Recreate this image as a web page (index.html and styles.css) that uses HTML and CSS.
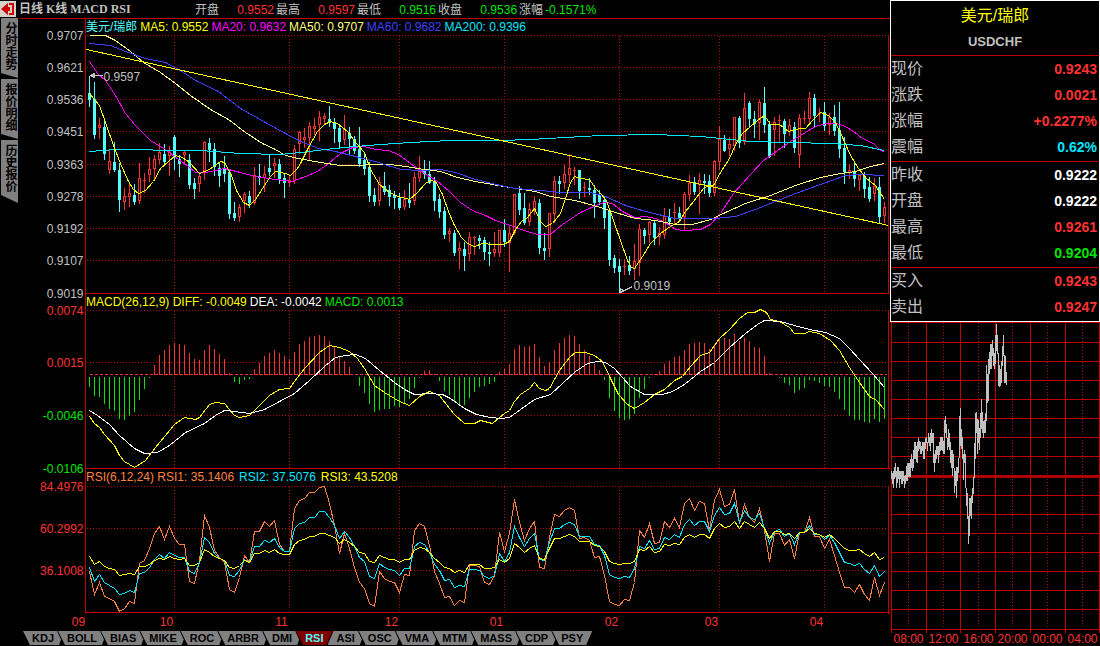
FILE: index.html
```html
<!DOCTYPE html>
<html lang="zh-CN">

<head>
    <meta charset="utf-8">
    <title>美元/瑞郎 日线</title>
    <link rel="stylesheet" href="styles.css">
</head>

<body>
    <div class="app">
        <div class="main">
            <!-- Top bar -->
            <header class="topbar">
                <button type="button" class="back-button" aria-label="返回">
                    <svg viewBox="0 0 16 16" width="16" height="16">
                        <path d="M1 8 L8 2 V6 H10 V10 H8 V14 Z" fill="#d00000"/>
                        <path d="M9 3 H13 V13 H9" fill="none" stroke="#d00000" stroke-width="2"/>
                    </svg>
                </button>
                <h1 class="title">日线 K线 MACD RSI</h1>
                <div class="quotes">
                    <span>开盘</span><span class="quote-value red">0.9552</span>
                    <span>最高</span><span class="quote-value red">0.9597</span>
                    <span>最低</span><span class="quote-value green">0.9516</span>
                    <span>收盘</span><span class="quote-value green">0.9536</span>
                    <span>涨幅</span><span class="green">-0.1571%</span>
                </div>
            </header>

            <div class="workspace">
                <!-- Views -->
                <nav class="side-tabs">
                    <button type="button" class="side-tab">分时走势</button>
                    <button type="button" class="side-tab">报价明细</button>
                    <button type="button" class="side-tab side-tab-last">历史报价</button>
                </nav>

                <!-- Charts -->
                <div class="charts">
                    <section class="panel">
                        <svg class="plot" id="kline" viewBox="17.5 17.5 872 275"></svg>
                        <p class="legend"><span class="aqua">美元/瑞郎</span><span class="yellow">MA5: 0.9552</span><span class="magenta">MA20: 0.9632</span><span class="pale">MA50: 0.9707</span><span class="blue">MA60: 0.9682</span><span class="cyan">MA200: 0.9396</span></p>
                    </section>
                    <section class="panel">
                        <svg class="plot" id="macd" viewBox="17.5 292.5 872 175"></svg>
                        <p class="legend"><span class="yellow">MACD(26,12,9) DIFF: -0.0049</span><span class="white">DEA: -0.0042</span><span class="green">MACD: 0.0013</span></p>
                    </section>
                    <section class="panel">
                        <svg class="plot" id="rsi" viewBox="17.5 467.5 872 162"></svg>
                        <p class="legend rsi-legend"><span class="orange">RSI(6,12,24) RSI1: 35.1406</span><span class="cyan">RSI2: 37.5076</span><span class="yellow">RSI3: 43.5208</span></p>
                    </section>
                </div>
            </div>

            <!-- Indicators -->
            <nav class="tabs">
                <button type="button" class="tab">KDJ</button>
                <button type="button" class="tab">BOLL</button>
                <button type="button" class="tab">BIAS</button>
                <button type="button" class="tab">MIKE</button>
                <button type="button" class="tab">ROC</button>
                <button type="button" class="tab">ARBR</button>
                <button type="button" class="tab">DMI</button>
                <button type="button" class="tab tab-active">RSI</button>
                <button type="button" class="tab">ASI</button>
                <button type="button" class="tab">OSC</button>
                <button type="button" class="tab">VMA</button>
                <button type="button" class="tab">MTM</button>
                <button type="button" class="tab">MASS</button>
                <button type="button" class="tab">CDP</button>
                <button type="button" class="tab">PSY</button>
            </nav>
        </div>

        <!-- Quote panel -->
        <aside class="quote-panel">
            <div class="quote-box">
                <div class="quote-head">
                    <h2 class="pair">美元/瑞郎</h2>
                    <p class="code">USDCHF</p>
                </div>
                <table class="quote-table">
                    <tbody>
                        <tr><th scope="row">现价</th><td class="red">0.9243</td></tr>
                        <tr><th scope="row">涨跌</th><td class="red">0.0021</td></tr>
                        <tr><th scope="row">涨幅</th><td class="red">+0.2277%</td></tr>
                        <tr><th scope="row">震幅</th><td class="cyan">0.62%</td></tr>
                    </tbody>
                    <tbody>
                        <tr><th scope="row">昨收</th><td class="white">0.9222</td></tr>
                        <tr><th scope="row">开盘</th><td class="white">0.9222</td></tr>
                        <tr><th scope="row">最高</th><td class="red">0.9261</td></tr>
                        <tr><th scope="row">最低</th><td class="green">0.9204</td></tr>
                    </tbody>
                    <tbody>
                        <tr><th scope="row">买入</th><td class="red">0.9243</td></tr>
                        <tr><th scope="row">卖出</th><td class="red">0.9247</td></tr>
                    </tbody>
                </table>
            </div>
            <svg class="plot" id="intraday" viewBox="889.5 321.5 210 324"></svg>
        </aside>
    </div>

    <script src="chart.js"></script>
</body>

</html>
```
FILE: styles.css
```css
/* General styles */
body {
    margin: 0;
    background-color: #000;
    color: #c0c0c0;
    font-family: "Liberation Sans", "Noto Sans CJK SC", sans-serif;
    font-size: 12px;
}

button {
    border: none;
    padding: 0;
    font-family: inherit;
    cursor: pointer;
}

.app {
    display: flex;
    align-items: flex-start;
}

.main {
    flex: 1;
    min-width: 0;
}

/* Text and line colors */
.red { color: #ff3232; }
.green { color: #00e600; }
.yellow { color: #ffff00; }
.magenta { color: #ff00ff; }
.pale { color: #ffff80; }
.blue { color: #4040ff; }
.cyan { color: #00e6ff; }
.aqua { color: #54ffff; }
.orange { color: #ff8040; }
.white { color: #fff; }

/* Top bar */
.topbar {
    display: flex;
    align-items: center;
    height: 18px;
    line-height: 18px;
}

.back-button {
    width: 16px;
    height: 16px;
    background-color: #d4d0c8;
}

.back-button svg {
    display: block;
}

.title {
    width: 176px;
    margin: 0 0 0 3px;
    font: bold 12px/18px "Liberation Serif", "Noto Sans CJK SC", serif;
    white-space: nowrap;
}

.quotes {
    display: flex;
    gap: 2px;
    padding-top: 2px;
    white-space: nowrap;
}

.quote-value {
    width: 53px;
    text-align: right;
}

/* Side tabs */
.workspace {
    display: flex;
    align-items: flex-start;
}

.side-tabs {
    display: flex;
    flex-direction: column;
    gap: 1px;
    width: 18px;
}

.side-tab {
    width: 17px;
    height: 60px;
    margin-left: 1px;
    padding-bottom: 4px;
    background-color: #808080;
    color: #000;
    font-size: 12px;
    font-weight: bold;
    line-height: 17px;
    writing-mode: vertical-rl;
    clip-path: polygon(0 0, 100% 0, 100% 100%, 0 calc(100% - 5px));
}

.side-tab-last {
    height: 63px;
    padding-bottom: 8px;
    clip-path: polygon(0 0, 100% 0, 100% 100%, 0 calc(100% - 8px));
}

/* Chart panels */
.charts {
    flex: 1;
    min-width: 0;
}

.panel {
    display: grid;
}

.panel > * {
    grid-area: 1 / 1;
}

.plot {
    display: block;
    width: 100%;
    height: auto;
    overflow: visible;
    shape-rendering: crispEdges;
}

.legend {
    display: flex;
    gap: 3px;
    margin: 0;
    padding: 1px 0 0 68px;
    line-height: 16px;
    white-space: nowrap;
}

.rsi-legend {
    gap: 5px;
}

.frame { stroke: #c00000; }
.grid { stroke: #b00000; stroke-dasharray: 1 2; }
.zero { stroke: #ff3232; stroke-dasharray: 3 2; }
.base { stroke: #b00000; stroke-width: 3; }
.line { fill: none; stroke: currentColor; }
.stick { stroke: currentColor; }
.solid { stroke: currentColor; stroke-width: 3; }
.hollow { fill: #000; stroke: currentColor; }
.label { fill: currentColor; font-size: 12px; }
.end { text-anchor: end; }
.middle { text-anchor: middle; }
.silver { color: #c0c0c0; }

/* Indicator tabs */
.tabs {
    display: flex;
    padding: 1px 0 0 23px;
}

.tab {
    height: 14px;
    margin-right: -5px;
    padding: 0 9px;
    background-color: #808080;
    color: #000;
    font-size: 11px;
    font-weight: bold;
    line-height: 14px;
    clip-path: polygon(0 0, calc(100% - 6px) 0, calc(100% - 2px) 60%, calc(100% - 4px) 100%, 7px 100%);
}

.tab-active {
    background-color: #800000;
    color: #54ffff;
    clip-path: polygon(0 0, 100% 0, calc(100% - 6px) 100%, 7px 100%);
}

.tab-active + .tab {
    clip-path: polygon(6px 0, calc(100% - 6px) 0, calc(100% - 2px) 60%, calc(100% - 4px) 100%, 0 100%);
}

.tab:last-child {
    clip-path: polygon(0 0, 100% 0, calc(100% - 6px) 100%, 7px 100%);
}

/* Quote panel */
.quote-panel {
    width: 210px;
}

.quote-box {
    border: 1px solid #fff;
}

.quote-head {
    padding-top: 2px;
    text-align: center;
}

.pair {
    margin: 0;
    color: #ffff00;
    font-size: 16px;
    font-weight: normal;
    line-height: 26px;
}

.code {
    margin: 0;
    font-size: 13px;
    font-weight: bold;
    line-height: 26px;
}

.quote-table {
    width: 100%;
    border-collapse: collapse;
}

.quote-table tbody {
    border-top: 1px solid #c00000;
}

.quote-table th {
    padding: 0;
    font-size: 16px;
    font-weight: normal;
    line-height: 26px;
    text-align: left;
}

.quote-table td {
    padding: 0 2px 0 0;
    font-size: 14px;
    font-weight: bold;
    line-height: 26px;
    text-align: right;
}

.quote-table tr:last-child > * {
    padding-bottom: 1px;
}
```
FILE: chart.js
```js
const SVG = "http://www.w3.org/2000/svg";
const FIRST_X = 89;
const STEP = 5;
const months = [["10", 174], ["11", 289], ["12", 399], ["01", 504], ["02", 619], ["03", 719], ["04", 824]];

// Candles: high, body top, body bottom, low; d = falling, u = rising
const candles = `75 92 98 105 d,81 98 133 137 d,117 125 127 137 u,120 126 152 158 d,149 161 169 172 u,141 161 168 170 d,162 169 198 210 d,187 196 201 208 u,182 193 196 205 u,183 194 200 203 d,
162 178 200 202 u,172 180 181 191 u,156 169 174 180 u,154 159 168 177 u,142 152 159 162 u,143 153 160 163 d,145 152 155 174 u,134 136 155 168 d,154 158 162 175 d,149 152 154 163 u,
153 159 183 187 d,177 182 187 197 d,171 176 183 190 u,140 142 170 178 u,137 142 148 160 d,142 148 165 174 d,161 167 174 185 d,155 167 172 180 d,168 171 212 217 d,201 212 216 219 d,
203 207 216 220 u,191 194 200 211 u,190 195 201 206 d,166 175 202 203 u,163 175 176 183 d,165 174 177 190 u,154 167 170 174 d,157 163 165 176 u,158 163 177 182 d,173 177 181 196 d,
174 180 182 185 u,144 149 180 182 u,130 132 143 152 u,127 137 139 146 u,121 126 137 158 u,117 126 128 133 u,110 117 124 139 u,112 116 118 123 u,105 118 121 125 d,117 122 127 141 d,
123 127 140 147 d,114 129 139 143 u,126 132 137 153 d,135 138 149 152 d,126 148 162 165 d,152 159 167 173 d,161 166 194 200 d,187 194 200 204 d,176 182 200 204 u,171 185 190 193 d,
184 189 195 204 d,190 194 196 207 d,192 197 206 208 d,189 199 206 208 u,182 199 201 206 d,171 177 200 203 u,155 171 177 180 u,159 168 172 177 d,160 173 181 182 d,176 180 199 209 d,
193 198 210 216 d,206 210 233 237 d,227 231 233 240 u,229 232 251 254 d,241 248 250 267 u,241 248 254 269 d,231 237 253 259 u,235 237 238 253 u,234 237 239 247 d,236 239 250 258 d,
241 251 252 264 d,231 249 252 255 u,230 230 252 255 u,218 229 240 245 d,224 233 242 270 u,193 194 232 233 u,185 192 208 213 d,192 207 221 223 d,202 209 221 224 u,196 201 210 213 u,
198 202 246 252 d,232 247 249 258 d,213 213 248 255 u,175 181 213 221 u,175 180 182 192 d,164 174 182 187 u,153 168 174 181 u,166 170 171 183 u,169 169 189 197 d,181 187 188 195 u,
177 187 188 193 d,184 189 201 216 d,189 194 200 203 d,195 199 216 227 d,208 209 258 264 d,254 257 266 271 d,258 265 270 292 d,258 266 267 273 u,255 264 269 273 d,243 261 268 278 u,
223 229 262 274 u,227 229 234 242 d,220 222 234 241 u,219 222 236 243 d,226 233 236 243 u,207 216 234 237 u,208 216 220 223 d,202 212 213 222 u,206 212 216 220 d,191 194 216 229 u,
174 183 194 199 u,176 181 190 193 d,172 180 184 212 u,173 180 181 192 d,174 180 191 195 d,159 161 192 194 u,125 139 161 168 u,134 139 149 150 d,136 144 148 154 u,116 117 145 149 u,
115 117 141 146 d,92 108 141 143 u,100 102 117 126 d,110 118 122 136 d,99 102 122 138 u,86 102 123 131 d,120 123 155 156 d,116 122 129 154 u,114 120 121 140 u,118 120 132 146 d,
118 125 131 134 u,121 126 146 151 d,113 118 154 166 u,110 118 119 122 u,91 98 118 122 u,93 97 114 125 d,107 113 114 120 u,101 111 124 129 d,112 117 124 133 u,104 116 129 134 d,
101 129 147 156 d,136 147 170 182 d,163 170 172 177 u,161 171 177 185 d,174 175 179 189 u,171 175 187 196 d,176 186 197 200 d,177 186 193 199 u,176 186 215 222 d,201 207 215 221 u`;

// Moving averages and the trend line
const averages = {
    magenta: "89,61 97,73 105,80 115,95 125,113 135,125 150,140 165,149 178,159 188,166 195,172 205,172 215,170 224,168 240,172 255,176 275,179 292,181 305,176 317,171 328,163 340,153 352,147 364,146 375,149 388,150 398,154 410,163 424,173 437,181 448,190 460,202 472,210 485,215 495,220 510,225 524,230 537,234 550,234 562,224 580,212 600,203 605,202 612,203 622,211 634,217 645,216 655,218 665,222 675,229 684,230 700,229 710,224 720,213 733,193 750,174 763,160 777,150 790,141 805,132 815,126 826,123 836,123 845,126 853,131 862,138 873,143 880,150 884,151",
    pale: "89,35 105,35 115,40 130,51 143,62 160,72 175,83 190,95 210,109 228,119 245,132 262,143 275,149 285,155 298,158 320,162 340,165 390,164 405,166 417,168 440,171 457,177 475,181 515,188 535,191 550,196 575,200 600,207 615,212 635,218 655,220 675,224 692,224 710,219 725,212 745,203 770,195 795,185 820,177 840,173 855,171 870,166 884,163",
    blue: "89,43 110,45 125,51 145,58 165,62 180,70 195,80 218,91 240,108 265,122 285,133 300,141 318,148 335,151 355,156 378,162 400,169 420,170 440,169 455,172 475,179 500,185 515,188 540,190 560,192 590,192 605,196 625,205 645,211 675,218 715,218 735,216 755,209 775,201 795,193 820,184 845,175 860,174 884,175",
    cyan: "89,151 115,149 140,149 165,150 200,150 240,153 280,154 300,152 325,149 355,146 380,144 410,142 450,140 500,140 530,139 600,135 655,134 700,136 750,141 790,142 830,143 860,145 884,150",
    yellow: "89,93 99,105 105,122 113,145 120,163 128,181 133,189 138,193 145,190 153,181 160,168 168,161 175,155 182,157 189,162 199,173 209,169 220,161 224,162 231,175 236,190 243,202 249,205 255,199 262,188 270,176 275,171 285,173 290,175 297,168 300,163 308,147 317,131 324,124 330,121 337,123 347,131 356,143 364,152 370,169 379,184 389,192 398,196 409,199 417,192 425,183 430,180 435,181 442,194 448,211 453,223 461,237 467,243 474,246 482,243 492,244 503,244 509,241 515,229 521,221 527,217 534,208 540,221 545,226 552,223 560,213 565,198 570,182 574,176 580,178 589,179 595,188 600,193 606,200 613,220 620,240 627,260 631,267 634,268 642,256 650,243 660,233 670,226 679,221 685,211 693,201 703,188 708,185 713,185 720,172 729,158 735,144 742,133 750,126 757,120 764,115 770,124 779,124 788,131 799,128 805,128 812,120 820,112 828,115 835,122 843,139 850,155 858,168 866,178 875,185 884,199"
};
const trend = "86,49 888,225";

// MACD bar ends and lines
const macdBars = [386, 395, 396, 403, 408, 410, 418, 419, 415, 411, 399, 388, 377, 364, 354, 349, 344, 342, 343, 344, 352, 358, 359, 349, 344, 348, 353, 358, 372, 381, 383, 379, 378, 368, 362, 355, 352, 349, 352, 355,
    358, 351, 343, 340, 336, 335, 334, 335, 340, 346, 356, 360, 366, 374, 385, 392, 403, 411, 409, 408, 408, 405, 406, 402, 398, 387, 377, 370, 369, 373, 380, 390, 394, 401, 403, 404, 397, 391, 386, 385,
    383, 381, 371, 368, 363, 348, 344, 346, 345, 343, 356, 365, 361, 349, 342, 337, 334, 335, 343, 349, 355, 363, 369, 379, 397, 410, 417, 419, 418, 413, 397, 388, 377, 373, 370, 363, 360, 356, 355, 349,
    343, 342, 341, 342, 348, 343, 337, 337, 338, 333, 340, 337, 340, 346, 347, 355, 372, 374, 377, 382, 384, 392, 389, 387, 379, 380, 382, 385, 386, 391, 398, 409, 415, 419, 419, 421, 422, 418, 421, 418];
const diff = "89,416 94,423 99,427 104,434 114,445 119,455 124,461 134,467 145,460 155,447 165,435 174,424 184,417 195,419 199,417 209,404 215,402 224,403 229,409 234,415 239,417 249,415 259,405 269,395 279,389 289,388 294,381 304,368 319,352 329,345 339,347 349,351 357,358 364,368 374,385 384,392 399,401 409,405 419,396 429,391 439,395 449,408 454,414 464,423 474,423 480,420 492,423 504,413 509,410 514,401 520,394 529,388 534,382 539,388 545,390 549,388 559,370 569,357 575,352 585,352 594,355 602,361 610,378 618,394 627,404 634,408 644,402 654,394 664,389 674,380 682,376 690,366 700,355 709,352 719,338 729,329 739,318 747,312 754,312 760,309 766,312 770,319 779,321 789,327 794,333 804,333 809,331 819,333 830,340 839,350 849,367 859,382 869,396 876,400 884,409";
const dea = "89,410 97,415 109,424 119,435 134,448 144,453 157,452 169,445 185,432 204,423 215,415 224,410 234,411 249,413 264,409 279,401 294,393 309,380 324,366 335,357 345,355 355,354 365,358 379,370 394,382 404,389 414,394 429,393 442,394 450,398 464,408 476,414 490,417 500,418 509,417 520,409 534,399 550,394 562,383 575,371 587,363 597,361 605,362 614,368 630,386 644,394 662,394 672,391 684,384 700,371 714,362 729,347 745,333 757,324 764,320 780,321 794,325 809,329 825,332 839,338 849,348 859,359 872,373 884,387";

// RSI levels, three to a unit, counted down from RSI_TOP
const RSI_TOP = 465;
const rsi = {
    orange: [317, 387, 350, 392, 400, 408, 438, 430, 408, 415, 293, 285, 250, 205, 182, 222, 182, 218, 237, 237, 347, 355, 285, 150, 185, 255, 277, 290, 372, 380, 335, 270, 290, 197, 198, 167, 183, 165, 237, 258,
        258, 130, 104, 100, 81, 80, 65, 64, 115, 180, 265, 205, 250, 305, 350, 370, 415, 423, 318, 338, 348, 350, 380, 327, 330, 195, 173, 183, 240, 318, 355, 397, 392, 420, 405, 410, 300, 300, 303, 350,
        358, 330, 200, 257, 205, 103, 170, 225, 190, 167, 305, 310, 215, 148, 152, 135, 125, 135, 218, 215, 225, 277, 273, 330, 408, 417, 421, 403, 405, 350, 195, 215, 175, 235, 232, 167, 187, 160, 185, 115,
        98, 135, 108, 113, 195, 105, 73, 123, 118, 73, 175, 118, 155, 170, 130, 195, 288, 205, 205, 240, 222, 280, 202, 202, 155, 213, 213, 250, 222, 270, 320, 365, 367, 382, 358, 387, 405, 335, 390, 352],
    cyan: [305, 347, 328, 352, 360, 368, 387, 385, 376, 382, 325, 322, 305, 283, 268, 280, 260, 270, 277, 275, 318, 325, 290, 217, 232, 265, 278, 285, 330, 334, 315, 283, 290, 242, 243, 224, 232, 220, 247, 257,
        257, 190, 173, 170, 155, 155, 139, 139, 155, 180, 220, 197, 215, 243, 275, 287, 332, 340, 293, 305, 313, 314, 331, 308, 310, 243, 232, 237, 260, 297, 315, 345, 343, 367, 359, 363, 312, 312, 315, 333,
        340, 330, 265, 287, 262, 182, 215, 242, 220, 205, 282, 285, 230, 188, 188, 178, 170, 176, 212, 212, 214, 238, 240, 270, 327, 335, 340, 333, 335, 310, 243, 250, 225, 252, 248, 215, 222, 207, 215, 178,
        163, 180, 167, 167, 197, 150, 125, 148, 145, 115, 170, 135, 155, 163, 143, 190, 235, 197, 193, 212, 205, 238, 202, 202, 180, 208, 208, 222, 210, 230, 262, 290, 293, 301, 293, 312, 325, 300, 333, 318],
    yellow: [274, 296, 288, 302, 310, 313, 329, 328, 324, 328, 303, 302, 296, 285, 280, 282, 274, 280, 283, 280, 301, 301, 290, 253, 260, 273, 280, 284, 307, 310, 300, 285, 290, 265, 265, 256, 260, 253, 263, 268,
        268, 236, 224, 222, 214, 213, 205, 205, 210, 217, 233, 223, 230, 242, 260, 263, 288, 292, 271, 276, 282, 283, 290, 282, 283, 255, 247, 250, 262, 280, 290, 306, 308, 321, 316, 321, 298, 298, 298, 308,
        310, 306, 282, 290, 278, 233, 247, 260, 248, 240, 280, 282, 250, 220, 219, 212, 208, 212, 229, 229, 229, 241, 242, 257, 288, 295, 298, 295, 295, 287, 252, 256, 243, 260, 257, 237, 241, 235, 238, 215,
        208, 215, 206, 207, 220, 190, 175, 187, 183, 167, 190, 169, 178, 185, 172, 188, 220, 198, 197, 207, 203, 220, 202, 202, 190, 205, 206, 215, 208, 220, 235, 250, 254, 256, 252, 263, 272, 262, 283, 277]
};

// Intraday range per column, three to a unit, counted down from DAY_TOP
const DAY_TOP = 315;
const day = `465-490 470-505 465-517 452-490 441-482 465-517 453-500 453-490 465-517 465-490 465-505 465-505 465-495 480-517 477-505 450-495 442-495 440-482 440-482 430-482
415-455 428-465 403-455 378-430 378-428 390-437 378-442 365-405 375-400 378-415 390-415 378-405 378-430 378-430 365-400 363-380 378-405 352-380 363-390 352-405
340-380 350-380 350-442 415-467 403-442 390-430 390-417 390-442 378-417 363-405 363-403 363-405 375-415 312-415 300-350 325-365 365-403 340-392 350-403 378-442
403-455 403-480 415-455 455-530 465-510 453-545 453-495 425-470 300-425 276-390 340-400 363-430 415-492 403-442 415-515 515-570 530-608 600-685 545-660 545-600
540-608 517-562 482-535 380-485 290-430 288-350 310-415 312-380 335-403 290-365 250-340 288-352 315-365 312-352 290-352 148-315 175-262 130-255 108-175 85-160
85-160 73-120 97-150 110-160 58-145 25-105 58-115 110-210 148-212 160-210 135-200 90-150 58-120 118-200 120-200 168-208`;

// Add one element to a chart
function add(parent, name, attributes, text) {
    const node = document.createElementNS(SVG, name);
    for (const key in attributes) {
        node.setAttribute(key, attributes[key]);
    }
    if (text) {
        node.textContent = text;
    }
    parent.appendChild(node);
}

function line(chart, x1, y1, x2, y2, cls) {
    add(chart, "line", { x1: x1, y1: y1, x2: x2, y2: y2, class: cls });
}

function polyline(chart, points, cls) {
    add(chart, "polyline", { points: points, class: "line " + cls });
}

function label(chart, x, y, text, cls) {
    add(chart, "text", { x: x, y: y, class: "label " + cls }, text);
}

// Frame, grid and axis labels shared by the three panels
function drawFrame(chart, top, gridTop, bottom, rows) {
    rows.forEach(row => {
        if (row[1] > top && row[1] < bottom) {
            line(chart, 86, row[1], 888, row[1], "grid");
        }
        label(chart, 83, row[1] + 4, row[0], "end " + row[2]);
    });
    months.forEach(month => line(chart, month[1], gridTop, month[1], bottom, "grid"));
    line(chart, 85, top, 85, bottom + 1, "frame");
    line(chart, 888, gridTop, 888, bottom + 1, "frame");
}

function drawKline() {
    const chart = document.getElementById("kline");
    const names = ["0.9707", "0.9621", "0.9536", "0.9451", "0.9363", "0.9278", "0.9192", "0.9107"];
    const levels = [35, 67, 99, 131, 164, 196, 228, 260];
    drawFrame(chart, 18, 35, 292, names.map((name, i) => [name, levels[i], "silver"]));
    line(chart, 19, 18, 890, 18, "frame");

    candles.split(",").forEach((item, i) => {
        const [high, top, bottom, low, type] = item.trim().split(" ");
        const x = FIRST_X + i * STEP;
        const color = type === "u" ? "red" : "aqua";
        line(chart, x, high, x, +low + 1, "stick " + color);
        if (type === "d") {
            line(chart, x, top, x, +bottom + 1, "solid " + color);
        } else if (bottom - top < 2) {
            line(chart, x - 1.5, top, x + 1.5, top, "stick " + color);
        } else {
            add(chart, "rect", { x: x - 1, y: top, width: 2, height: bottom - top, class: "hollow " + color });
        }
    });

    for (const color in averages) {
        polyline(chart, averages[color], color);
    }
    polyline(chart, trend, "yellow");

    // Highest and lowest price marks
    polyline(chart, "102,75 90,75 94,73 94,77 90,75", "silver");
    label(chart, 103, 80, "0.9597", "silver");
    polyline(chart, "632,286 620,292 620,288 624,291", "silver");
    label(chart, 633, 289, "0.9019", "silver");
}

function drawMacd() {
    const chart = document.getElementById("macd");
    drawFrame(chart, 293, 310, 467, [["0.9019", 293, "silver"], ["0.0074", 310, "red"], ["0.0015", 362, "red"], ["-0.0046", 415, "green"]]);
    line(chart, 85, 293, 889, 293, "frame");
    line(chart, 89, 374, 886, 374, "zero");
    macdBars.forEach((end, i) => {
        const x = FIRST_X + i * STEP;
        if (end < 375) {
            line(chart, x, end, x, 374, "stick red");
        } else {
            line(chart, x, 376, x, end, "stick green");
        }
    });
    polyline(chart, diff, "yellow");
    polyline(chart, dea, "white");
}

function drawRsi() {
    const chart = document.getElementById("rsi");
    drawFrame(chart, 468, 486, 612, [["-0.0106", 468, "green"], ["84.4976", 486, "red"], ["60.2992", 528, "red"], ["36.1008", 570, "red"]]);
    line(chart, 85, 468, 889, 468, "frame");
    line(chart, 85, 612, 889, 612, "frame");
    for (const color in rsi) {
        polyline(chart, rsi[color].map((level, i) => (FIRST_X + i * STEP) + "," + Math.round(RSI_TOP + level / 3)).join(" "), color);
    }
    label(chart, 78, 625, "09", "middle red");
    months.forEach(month => label(chart, month[1] - 8, 625, month[0], "middle red"));
}

function drawIntraday() {
    const chart = document.getElementById("intraday");
    [908, 943, 978, 1012, 1047, 1082].forEach((x, i) => {
        line(chart, x, 322, x, 629, "grid");
        label(chart, x, 642, ["08:00", "12:00", "16:00", "20:00", "00:00", "04:00"][i], "middle red");
    });
    [891, 926, 960, 995, 1030, 1065, 1099].forEach(x => line(chart, x, 322, x, 632, "frame"));
    [322, 342, 361, 380, 399, 418, 437, 456, 495, 514, 533, 552, 571, 590, 609, 629].forEach(y => line(chart, 890, y, 1100, y, "frame"));
    line(chart, 890, 476, 1100, 476, "base");
    day.split(/\s+/).forEach((range, i) => {
        const [high, low] = range.split("-");
        line(chart, 891 + i, Math.round(DAY_TOP + high / 3), 891 + i, Math.round(DAY_TOP + low / 3), "stick silver");
    });
}

drawKline();
drawMacd();
drawRsi();
drawIntraday();
```
